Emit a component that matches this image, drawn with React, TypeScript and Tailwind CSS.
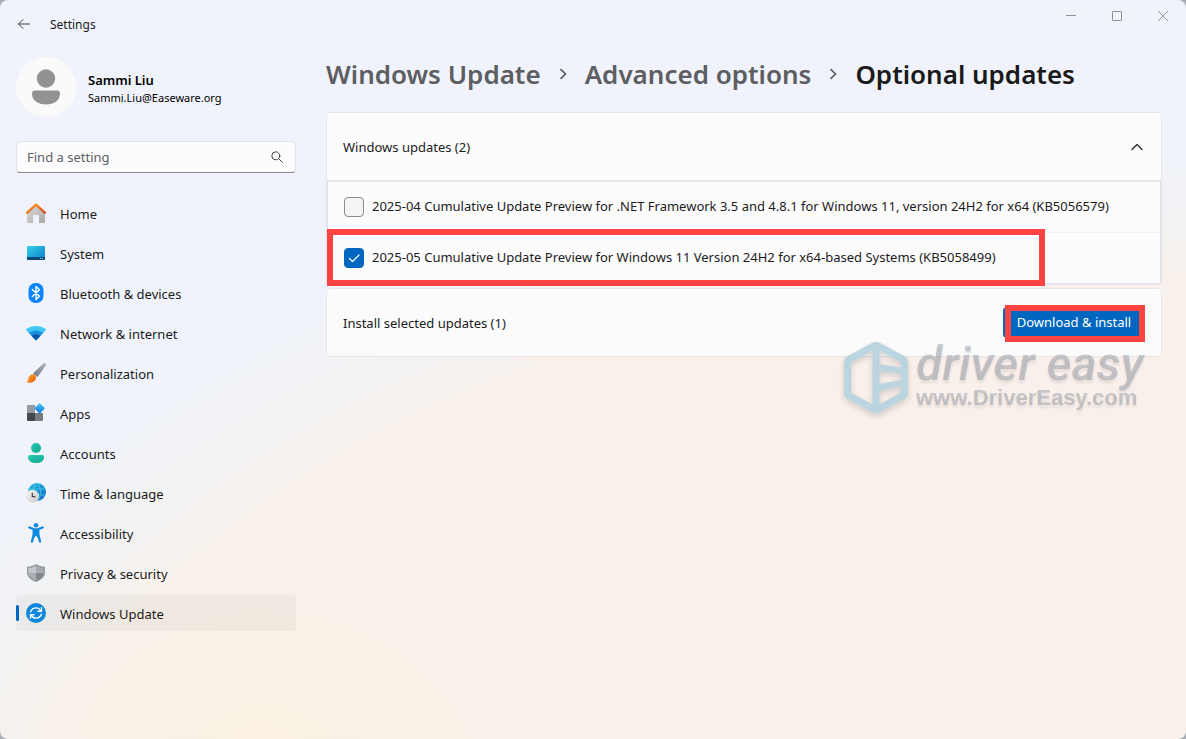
import { useState } from "react";
import type { ReactNode } from "react";

const HomeIcon = () => (
    <svg viewBox="0 0 20 20" className="w-5 h-5">
        <defs>
            <linearGradient id="houseWall" x1="0" y1="0" x2="1" y2="1">
                <stop offset="0" stopColor="#dedede" />
                <stop offset="1" stopColor="#a9a9a9" />
            </linearGradient>
            <linearGradient id="houseRoof" x1="0" y1="0" x2="1" y2="1">
                <stop offset="0" stopColor="#fba01c" />
                <stop offset="1" stopColor="#d8481c" />
            </linearGradient>
        </defs>
        <path d="M1 9.5 10 1.5l9 8V19a1 1 0 0 1-1 1h-4.500a.6.6 0 0 1-.6-.6V12.600a.6.6 0 0 0-.6-.6H7.700a.6.6 0 0 0-.6.6v6.800a.6.6 0 0 1-.6.6H2a1 1 0 0 1-1-1z" fill="url(#houseWall)" />
        <path d="M1.200 9.700 10 1.700l8.800 8" fill="none" stroke="url(#houseRoof)" strokeWidth="2.400" strokeLinecap="round" strokeLinejoin="round" />
    </svg>
);

const SystemIcon = () => (
    <svg viewBox="0 0 20 20" className="w-5 h-5">
        <defs>
            <linearGradient id="screen" x1="0" y1="0" x2="1" y2="1">
                <stop offset="0" stopColor="#35d1e4" />
                <stop offset="1" stopColor="#0c7cd0" />
            </linearGradient>
        </defs>
        <rect x="1" y="3" width="18" height="14" rx="1" fill="url(#screen)" />
        <path d="M1 14h18v2a1 1 0 0 1-1 1H2a1 1 0 0 1-1-1z" fill="#0a4a78" />
        <path d="M14 15h1v1h-1zM16 15h1v1h-1z" fill="#9fd8f0" />
    </svg>
);

const BluetoothIcon = () => (
    <svg viewBox="0 0 20 20" className="w-5 h-5">
        <rect x="2.500" y="0" width="15" height="20" rx="7" fill="#0a84ff" />
        <path d="m6.300 6.500 7.200 6.800-3.500 3.200v-13l3.500 3.200-7.200 6.800" fill="none" stroke="#fff" strokeWidth="1.400" strokeLinejoin="round" strokeLinecap="round" />
    </svg>
);

const NetworkIcon = () => (
    <svg viewBox="0 0 20 20" className="w-5 h-5">
        <path d="M10 17.500.300 7.200Q-.1 6.600.4 6.100C5.700 1.900 14.300 1.900 19.600 6.100q.5.500.1 1.100z" fill="#3fc8f2" />
        <path d="M10 17.500 3 10C6.900 6.500 13.100 6.500 17 10z" fill="#1a8fdd" />
        <path d="M10 17.500 5.700 13c2.300-2.300 6.300-2.300 8.600 0z" fill="#0b57a8" />
    </svg>
);

const BrushIcon = () => (
    <svg viewBox="0 0 20 20" className="w-5 h-5">
        <defs>
            <linearGradient id="brushHandle" x1="0" y1="1" x2="1" y2="0">
                <stop offset="0" stopColor="#6d747c" />
                <stop offset="1" stopColor="#b3b8bf" />
            </linearGradient>
            <linearGradient id="brushTip" x1="0" y1="0" x2="1" y2="1">
                <stop offset="0" stopColor="#fcae2e" />
                <stop offset="1" stopColor="#e8590c" />
            </linearGradient>
        </defs>
        <path d="M19.600.4c.6.600.5 1.500 0 2.300L11.500 14 7 10.500 17.300.6c.7-.6 1.700-.8 2.300-.2z" fill="url(#brushHandle)" />
        <path d="M9.200 12.200c1.300 1.500 1 3.900-.5 5.500C6.600 19.900 3 20.300.3 19c1.500-.5 1.700-1.400 1.900-3 .5-3.900 4.600-6 7-3.800z" fill="url(#brushTip)" />
    </svg>
);

const AppsIcon = () => (
    <svg viewBox="0 0 20 20" className="w-5 h-5">
        <defs>
            <linearGradient id="appTile" x1="0" y1="0" x2="1" y2="1">
                <stop offset="0" stopColor="#4cc8f7" />
                <stop offset="1" stopColor="#0d78d8" />
            </linearGradient>
        </defs>
        <path d="M2 2h7v8H1V3a1 1 0 0 1 1-1z" fill="#929aa4" />
        <path d="M1 10h8v8H2a1 1 0 0 1-1-1z" fill="#44474b" />
        <path d="M9 10h8v7a1 1 0 0 1-1 1H9z" fill="#767b82" />
        <rect x="9.800" y="1.500" width="7.600" height="7.600" rx="1" transform="rotate(45 13.600 5.300)" fill="url(#appTile)" />
    </svg>
);

const AccountsIcon = () => (
    <svg viewBox="0 0 20 20" className="w-5 h-5">
        <defs>
            <linearGradient id="person" x1="0" y1="0" x2="1" y2="1">
                <stop offset="0" stopColor="#2bcdb0" />
                <stop offset="1" stopColor="#0fa595" />
            </linearGradient>
        </defs>
        <circle cx="10" cy="5" r="5" fill="url(#person)" />
        <path d="M4 12h12a2 2 0 0 1 2 2c0 4-3.500 6-8 6s-8-2-8-6a2 2 0 0 1 2-2z" fill="url(#person)" />
    </svg>
);

const TimeIcon = () => (
    <svg viewBox="0 0 20 20" className="w-5 h-5">
        <defs>
            <linearGradient id="globe" x1="0" y1="0" x2="1" y2="1">
                <stop offset="0" stopColor="#28c0dc" />
                <stop offset="1" stopColor="#0b68c8" />
            </linearGradient>
            <linearGradient id="clock" x1="0" y1="0" x2="1" y2="1">
                <stop offset="0" stopColor="#f7f7f7" />
                <stop offset="1" stopColor="#c9c9c9" />
            </linearGradient>
        </defs>
        <circle cx="11" cy="9" r="9" fill="url(#globe)" />
        <path d="M2.800 6h16.400M4 12h16M11 0c-5 5-5 13 0 18M11 0c5 5 5 13 0 18" fill="none" stroke="#4fd0e6" strokeWidth=".7" />
        <circle cx="6.500" cy="13.200" r="6.500" fill="url(#clock)" />
        <path d="M6.300 9.700v4h3" fill="none" stroke="#444" strokeWidth="1.200" />
    </svg>
);

const AccessibilityIcon = () => (
    <svg viewBox="0 0 20 20" className="w-5 h-5">
        <circle cx="10" cy="2.300" r="2.300" fill="#0f8ae0" />
        <path d="M3.300 4.500 7.500 6q2.500.8 5 0l4.200-1.500M7.700 6.500v5L6 18.600M12.300 6.500v5l1.700 7.100" fill="none" stroke="#0f8ae0" strokeWidth="2.300" strokeLinecap="round" strokeLinejoin="round" />
        <path d="M7 6h6v6.500l-1 2.500-2-2.500L8 15l-1-2.500z" fill="#0f8ae0" />
    </svg>
);

const ShieldIcon = () => (
    <svg viewBox="0 0 20 20" className="w-5 h-5">
        <path d="M10 1c2.700 1.900 5.500 2.700 9 2.800v5.500c0 4.600-3.500 7.700-9 9.700-5.500-2-9-5.100-9-9.700V3.800C4.500 3.700 7.300 2.900 10 1z" fill="#92979d" />
        <path d="M10 2.800v7.500H2.300V5c3-.2 5.300-.8 7.700-2.200z" fill="#c3c7cc" />
        <path d="M10 2.800C12.400 4.200 14.700 4.800 17.700 5v5.300H10z" fill="#a5aab0" />
        <path d="M2.300 10.300H10v7.300c-4.600-1.800-7.300-4.200-7.700-7.300z" fill="#a9aeb4" />
        <path d="M10 10.300h7.700c-.4 3.100-3.100 5.500-7.700 7.300z" fill="#81868d" />
    </svg>
);

const UpdateIcon = () => (
    <svg viewBox="0 0 20 20" className="w-5 h-5">
        <circle cx="10" cy="10" r="10" fill="#0f87dd" />
        <path d="M4.600 8.800C5.600 6.200 7.600 4.900 10 4.900c2 0 3.700 1 4.900 2.800M15.400 11.200c-1 2.600-3 3.900-5.400 3.900-2 0-3.700-1-4.900-2.800" fill="none" stroke="#fff" strokeWidth="1.400" strokeLinecap="round" />
        <path d="M15.500 4.700v3.500H12M4.500 15.300v-3.500H8" fill="none" stroke="#fff" strokeWidth="1.400" strokeLinecap="round" strokeLinejoin="round" />
    </svg>
);

const navItems: { label: string; icon: ReactNode }[] = [
    { label: "Home", icon: <HomeIcon /> },
    { label: "System", icon: <SystemIcon /> },
    { label: "Bluetooth & devices", icon: <BluetoothIcon /> },
    { label: "Network & internet", icon: <NetworkIcon /> },
    { label: "Personalization", icon: <BrushIcon /> },
    { label: "Apps", icon: <AppsIcon /> },
    { label: "Accounts", icon: <AccountsIcon /> },
    { label: "Time & language", icon: <TimeIcon /> },
    { label: "Accessibility", icon: <AccessibilityIcon /> },
    { label: "Privacy & security", icon: <ShieldIcon /> },
    { label: "Windows Update", icon: <UpdateIcon /> },
];

const updates = [
    {
        id: "KB5056579",
        title: "2025-04 Cumulative Update Preview for .NET Framework 3.5 and 4.8.1 for Windows 11, version 24H2 for x64 (KB5056579)",
    },
    {
        id: "KB5058499",
        title: "2025-05 Cumulative Update Preview for Windows 11 Version 24H2 for x64-based Systems (KB5058499)",
        highlighted: true,
    },
];

function TitleBar() {
    return (
        <header className="flex items-start justify-between h-12">
            <div className="flex items-center h-12 pl-4 gap-4">
                <button type="button" aria-label="Back" className="w-4 h-4 text-[#444]">
                    <svg viewBox="0 0 16 16" className="w-4 h-4" fill="none" stroke="currentColor" strokeLinecap="round" strokeLinejoin="round">
                        <path d="M13.500 8h-11M7 3.500 2.500 8 7 12.500" />
                    </svg>
                </button>
                <span className="pl-0.5 pt-0.5 text-[12px] text-[#1b1b1b]">Settings</span>
            </div>
            <div className="flex text-[#93959a]">
                <button type="button" aria-label="Minimize" className="flex items-center justify-center w-[46px] h-8">
                    <svg viewBox="0 0 10 10" className="w-2.5 h-2.5" stroke="currentColor">
                        <path d="M0 4.500h10" />
                    </svg>
                </button>
                <button type="button" aria-label="Maximize" className="flex items-center justify-center w-[46px] h-8">
                    <svg viewBox="0 0 10 10" className="w-2.5 h-2.5" fill="none" stroke="currentColor">
                        <rect x=".5" y=".5" width="9" height="9" rx=".5" />
                    </svg>
                </button>
                <button type="button" aria-label="Close" className="flex items-center justify-center w-[46px] h-8">
                    <svg viewBox="0 0 10 10" className="w-2.5 h-2.5" stroke="currentColor">
                        <path d="m0 0 10 10M10 0 0 10" />
                    </svg>
                </button>
            </div>
        </header>
    );
}

function Sidebar() {
    return (
        <aside className="w-[280px] shrink-0 pt-[9px]">
            <div className="flex items-center gap-3">
                <div className="flex items-center justify-center w-[60px] h-[60px] rounded-full bg-[#fafafb]">
                    <svg viewBox="0 0 30 36" className="w-[30px] h-9" fill="#929292">
                        <circle cx="15" cy="9.500" r="9.200" />
                        <path d="M4 21.500h22a3 3 0 0 1 3 3c0 7-6 11-14 11s-14-4-14-11a3 3 0 0 1 3-3z" />
                    </svg>
                </div>
                <div className="pt-1 text-black">
                    <p className="text-[13px] leading-[18px] font-semibold">Sammi Liu</p>
                    <p className="text-[11px] leading-[18px]">Sammi.Liu@Easeware.org</p>
                </div>
            </div>

            <label className="flex items-center h-8 mt-6 pl-2.5 pr-3 rounded-[4px] border border-[#e1e3e9] border-b-[#85878c] bg-[#fcfcfe]">
                <input
                    type="text"
                    aria-label="Find a setting"
                    placeholder="Find a setting"
                    className="flex-1 min-w-0 pt-0.5 bg-transparent text-[13px] placeholder:text-[#606164] outline-none"
                />
                <svg viewBox="0 0 12 12" className="w-3 h-3 text-[#444]" fill="none" stroke="currentColor" strokeLinecap="round">
                    <circle cx="4.800" cy="4.800" r="4" />
                    <path d="m7.800 7.800 3.600 3.600" />
                </svg>
            </label>

            <nav className="flex flex-col gap-1 mt-[22px]">
                {navItems.map((item) => {
                    const active = item.label === "Windows Update";
                    return (
                        <a
                            key={item.label}
                            href="#"
                            aria-current={active ? "page" : undefined}
                            className={`relative flex items-center h-9 pl-2.5 gap-3.5 rounded-[4px] text-[13px] text-[#1b1b1b] ${active ? "bg-black/[0.035]" : ""}`}
                        >
                            {active && <span className="absolute left-0 top-2.5 w-[3px] h-4 rounded-full bg-[#0067c0]" />}
                            {item.icon}
                            <span className="pt-1">{item.label}</span>
                        </a>
                    );
                })}
            </nav>
        </aside>
    );
}

function Separator() {
    return (
        <svg viewBox="0 0 8 12" className="w-2 h-3 text-[#5d5e61]" fill="none" stroke="currentColor" strokeWidth="1.700">
            <path d="m1.500 1.200 5 4.800-5 4.800" />
        </svg>
    );
}

function Watermark() {
    return (
        <div className="absolute right-4 top-[51px] flex items-start gap-2 pointer-events-none">
            <svg viewBox="0 0 64 71" className="w-16 h-[71px] mt-0.5 opacity-90 drop-shadow-[0_3px_3px_rgba(0,0,0,0.18)]">
                <path
                    fillRule="evenodd"
                    fill="#b4d3de"
                    d="M28 1q4-2 8 0l24 13q4 2 4 6v31q0 4-4 6L36 70q-4 2-8 0L4 57q-4-2-4-6V20q0-4 4-6zM28.500 8.500 7 20.500v30l21.500 12zM35.500 8v14L57 25.500V20.500zM35.500 29v13L57 38V31.500zM35.500 49v13.500L57 50.500v-6.500z"
                />
            </svg>
            <div className="w-[229px] whitespace-nowrap text-[#88909a]/45 [text-shadow:0_3px_3px_rgba(0,0,0,0.08)]">
                <p className="font-[Roboto,sans-serif] text-[48px] leading-[47px] font-medium italic">driver easy</p>
                <p className="font-['Liberation_Sans',Arial,sans-serif] text-[22px] leading-[22px] font-bold">www.DriverEasy.com</p>
            </div>
        </div>
    );
}

export default function App() {
    const [selected, setSelected] = useState(["KB5058499"]);
    const [open, setOpen] = useState(true);

    const toggle = (id: string) =>
        setSelected((prev) => (prev.includes(id) ? prev.filter((x) => x !== id) : [...prev, id]));

    return (
        <div className="bg-[#a9adb3]">
            <div className="min-h-screen rounded-lg font-['Noto_Sans','Open_Sans',sans-serif] bg-[radial-gradient(ellipse_26%_30%_at_22%_102%,#faf1e3_0%,#faf1e300_100%),radial-gradient(ellipse_108%_101%_at_93%_122%,#faf0eb_0%,#f9f0ec_79%,#f8f1ec_84%,#f2f3f4_92%,#f0f3fb_101%)]">
                <TitleBar />
                <div className="flex gap-[30px] pl-4 pr-6">
                    <Sidebar />

                    <main className="flex-1 min-w-0 pt-1.5">
                        <h1 className="flex items-center gap-[18px] h-10 text-[26px] font-semibold whitespace-nowrap">
                            <a href="#" className="text-[#5d5e61]">Windows Update</a>
                            <Separator />
                            <a href="#" className="text-[#5d5e61]">Advanced options</a>
                            <Separator />
                            <span className="text-[#1a1a1a]">Optional updates</span>
                        </h1>

                        <section className="mt-[18px] rounded-[4px] border border-[#e4e6ec] bg-[#fcfcfd] text-[13px] text-[#1b1b1b]">
                            <button type="button" aria-expanded={open} onClick={() => setOpen(!open)} className="flex items-center justify-between w-full h-[67px] px-4">
                                <span className="pt-0.5">Windows updates (2)</span>
                                <svg viewBox="0 0 16 16" className={`w-4 h-4 text-[#222] ${open ? "" : "rotate-180"}`} fill="none" stroke="currentColor" strokeWidth="1.200" strokeLinecap="round" strokeLinejoin="round">
                                    <path d="m3 10.500 5-5 5 5" />
                                </svg>
                            </button>
                            {open && (
                                <ul className="border-t-2 border-x border-b border-[#e2e4ea] rounded-b-[4px]">
                                    {updates.map((update, i) => (
                                        <li key={update.id} className={`relative ${i > 0 ? "border-t border-[#eff0f3]" : ""}`}>
                                            <label className="flex items-center h-[50px] pl-4 gap-2 whitespace-nowrap">
                                                <span className="relative w-5 h-5 shrink-0">
                                                    <input
                                                        type="checkbox"
                                                        checked={selected.includes(update.id)}
                                                        onChange={() => toggle(update.id)}
                                                        className="peer block appearance-none w-5 h-5 rounded-[4px] border border-[#8b8b8c] bg-[#f5f5f6] checked:bg-[#0067c0] checked:border-[#0067c0]"
                                                    />
                                                    <svg viewBox="0 0 20 20" className="absolute inset-0 hidden peer-checked:block pointer-events-none" fill="none" stroke="#fff" strokeWidth="1.200" strokeLinecap="round" strokeLinejoin="round">
                                                        <path d="m5.500 10.500 3 3 6.500-6.500" />
                                                    </svg>
                                                </span>
                                                <span>{update.title}</span>
                                            </label>
                                            {update.highlighted && (
                                                <div className="absolute -left-px -top-1 w-[718px] h-[57px] border-[6px] border-[#ff4343] pointer-events-none" />
                                            )}
                                        </li>
                                    ))}
                                </ul>
                            )}
                        </section>

                        <section className="relative flex items-center justify-between h-[69px] mt-[3px] px-4 rounded-[4px] border border-[#e9e6e8] bg-[#fcfbfb] text-[13px] text-[#1b1b1b]">
                            <span className="pt-0.5">Install selected updates ({selected.length})</span>
                            <div className="relative">
                                <button type="button" className="block w-[142px] h-[31px] pt-px rounded-[4px] bg-[#0067c0] text-white">
                                    Download &amp; install
                                </button>
                                <div className="absolute left-0.5 right-0 -top-0.5 h-[37px] border-[6px] border-[#ff4343] pointer-events-none" />
                            </div>
                            <Watermark />
                        </section>
                    </main>
                </div>
            </div>
        </div>
    );
}
